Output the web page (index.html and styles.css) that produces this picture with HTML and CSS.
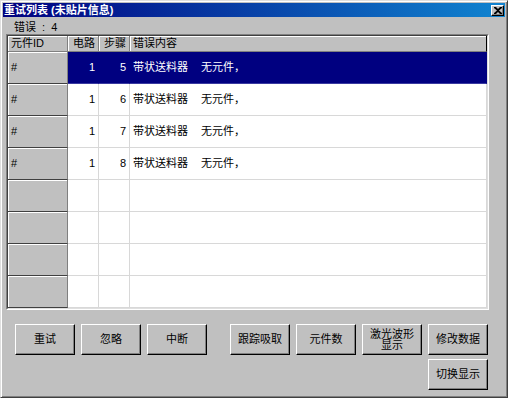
FILE: index.html
```html
<!DOCTYPE html>
<html lang="zh-CN">
<head>
  <meta charset="UTF-8">
  <title>重试列表</title>
  <link rel="stylesheet" href="styles.css">
</head>
<body>
  <div class="window">
    <!-- Barre de titre -->
    <div class="titlebar">
      <span class="title">重试列表 (未贴片信息)</span>
      <button class="close-btn" aria-label="关闭">
        <svg width="8" height="7" viewBox="0 0 8 7">
          <path d="M0 0h2l2 2 2-2h2v1L5 3.5 8 6v1H6L4 5 2 7H0V6l3-2.5L0 1z" fill="#000"/>
        </svg>
      </button>
    </div>

    <div class="count">错误 <span class="colon">:</span> 4</div>

    <div class="grid-frame">
      <div class="grid-inner">
        <div class="grid">
          <div class="hcell">元件ID</div>
          <div class="hcell num">电路</div>
          <div class="hcell num">步骤</div>
          <div class="hcell last">错误内容</div>

          <div class="rowhead">#</div>
          <div class="cell num selected">1</div>
          <div class="cell num selected">5</div>
          <div class="cell selected"><span class="part">带状送料器</span><span>无元件，</span></div>

          <div class="rowhead">#</div>
          <div class="cell num">1</div>
          <div class="cell num">6</div>
          <div class="cell"><span class="part">带状送料器</span><span>无元件，</span></div>

          <div class="rowhead">#</div>
          <div class="cell num">1</div>
          <div class="cell num">7</div>
          <div class="cell"><span class="part">带状送料器</span><span>无元件，</span></div>

          <div class="rowhead">#</div>
          <div class="cell num">1</div>
          <div class="cell num">8</div>
          <div class="cell"><span class="part">带状送料器</span><span>无元件，</span></div>

          <div class="rowhead"></div><div class="cell"></div><div class="cell"></div><div class="cell"></div>
          <div class="rowhead"></div><div class="cell"></div><div class="cell"></div><div class="cell"></div>
          <div class="rowhead"></div><div class="cell"></div><div class="cell"></div><div class="cell"></div>
          <div class="rowhead"></div><div class="cell"></div><div class="cell"></div><div class="cell"></div>
        </div>
      </div>
    </div>

    <div class="buttons">
      <button class="btn">重试</button>
      <button class="btn">忽略</button>
      <button class="btn">中断</button>
      <button class="btn group-start">跟踪吸取</button>
      <button class="btn">元件数</button>
      <button class="btn two-lines">激光波形<br>显示</button>
      <button class="btn">修改数据</button>
    </div>
    <div class="buttons second">
      <button class="btn">切换显示</button>
    </div>
  </div>
</body>
</html>
```

FILE: styles.css
```css
/* Fenêtre style Windows classique */
body {
  margin: 0;
  padding: 0;
  background: #c0c0c0;
  font-family: "Liberation Sans", "Noto Sans CJK SC", sans-serif;
  font-size: 11px;
  color: #000;
}
.window {
  width: 508px;
  height: 398px;
  box-sizing: border-box;
  background: #c0c0c0;
  border: 1px solid;
  border-color: #dfdfdf #404040 #404040 #dfdfdf;
  box-shadow: inset 1px 1px #fff, inset -1px -1px #808080;
  padding: 2px;
}
/* Barre de titre en dégradé */
.titlebar {
  height: 14px;
  display: flex;
  align-items: center;
  justify-content: space-between;
  background: linear-gradient(90deg, #000080, #1084d0);
  padding: 0 1px 0 1px;
}
.title {
  color: #fff;
  font-weight: bold;
  font-size: 11px;
  line-height: 14px;
  white-space: nowrap;
}
.close-btn {
  width: 13px;
  height: 11px;
  padding: 0;
  display: flex;
  align-items: center;
  justify-content: center;
  background: #c0c0c0;
  border: 1px solid;
  border-color: #fff #000 #000 #fff;
  box-shadow: inset -1px -1px #808080;
}
.count {
  height: 17px;
  line-height: 21px;
  padding-left: 11px;
}
.colon {
  margin: 0 3px;
}
/* Cadre creux autour de la grille */
.grid-frame {
  margin-left: 3px;
  width: 483px;
  box-sizing: border-box;
  border: 1px solid;
  border-color: #808080 #fff #fff #808080;
}
.grid-inner {
  border: 1px solid;
  border-color: #404040 #dfdfdf #dfdfdf #404040;
}
.grid {
  display: grid;
  grid-template-columns: 60px 31px 31px 1fr;
  grid-template-rows: 16px repeat(8, 32px);
  background: #fff;
}
.hcell {
  box-sizing: border-box;
  background: #c0c0c0;
  border-right: 1px solid #808080;
  border-bottom: 1px solid #808080;
  box-shadow: inset 1px 1px #fff;
  padding: 0 3px;
  line-height: 15px;
  white-space: nowrap;
}
.hcell.last {
  border-right-color: #000;
}
.num {
  text-align: right;
}
.rowhead {
  box-sizing: border-box;
  background: #c0c0c0;
  border-right: 1px solid #808080;
  border-bottom: 1px solid #404040;
  box-shadow: inset 1px 1px #fff;
  padding: 0 3px;
  line-height: 31px;
}
.cell {
  box-sizing: border-box;
  border-right: 1px solid #d8d8d8;
  border-bottom: 1px solid #d8d8d8;
  padding: 0 3px;
  line-height: 31px;
  white-space: nowrap;
}
.cell.selected {
  background: #000080;
  color: #fff;
  border-right-color: #000080;
  border-bottom-color: #3a3aa0;
}
.part {
  margin-right: 13px;
}
/* Boutons du bas */
.buttons {
  display: flex;
  gap: 6px;
  padding-left: 12px;
  margin-top: 14px;
}
.buttons.second {
  justify-content: flex-end;
  padding-right: 17px;
  margin-top: 4px;
}
.btn {
  width: 60px;
  height: 31px;
  padding: 0;
  background: #c0c0c0;
  font-family: inherit;
  font-size: 11px;
  line-height: 11px;
  color: #000;
  border: 1px solid;
  border-color: #fff #000 #000 #fff;
  box-shadow: inset -1px -1px #808080;
}
.btn.group-start {
  margin-left: 17px;
}
```
